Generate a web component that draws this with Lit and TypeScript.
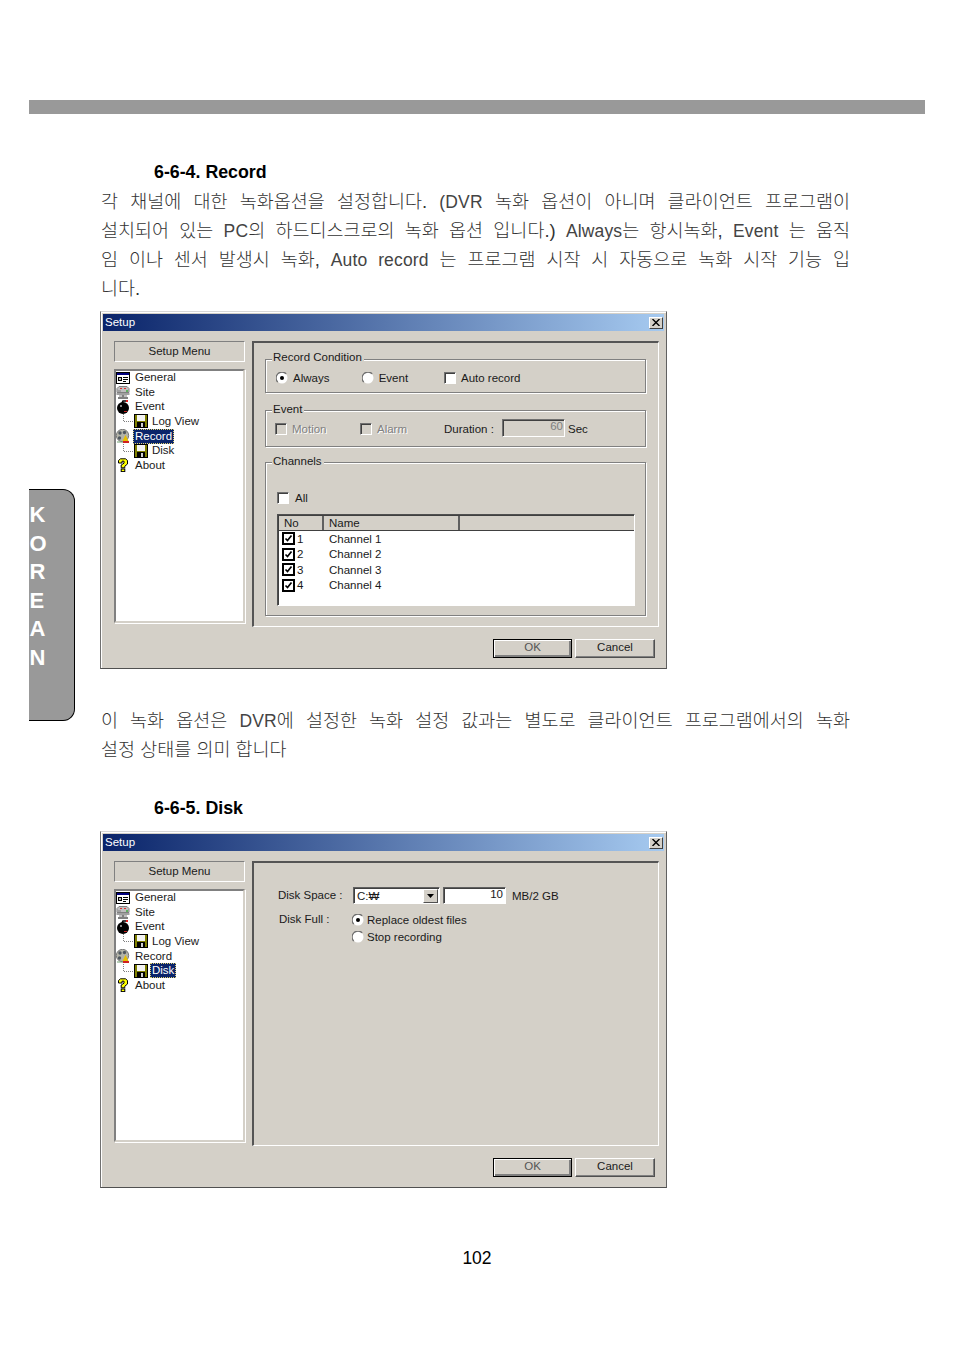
import { LitElement, html, css, svg, nothing } from "lit";
import { customElement, property } from "lit/decorators.js";

const icons: Record<string, any> = {
  general: svg`<rect x="0.5" y="1.5" width="13" height="11" fill="#fff" stroke="#000"/><rect x="1" y="2" width="12" height="2" fill="#000080"/><rect x="2" y="6" width="4" height="4" fill="#000"/><path d="M7 6.5h5M7 8.5h5M7 10.5h3" stroke="#000"/><path d="M3 7h2v2h-2z" fill="#c0c0c0"/>`,
  site: svg`<path d="M3 1.5h8l2 2v4H1v-4z" fill="#c0c0c0" stroke="#808080"/><path d="M4 3.5h2M8 3.5h2" stroke="#e03030"/><path d="M2 6h3" stroke="#808080"/><path d="M10 6h2" stroke="#00a000"/><rect x="0.5" y="8" width="13" height="2" fill="#a0a0a0"/><path d="M7 10v2M2 13h10" stroke="#000"/><path d="M3 11h8" stroke="#808080"/>`,
  event: svg`<circle cx="7" cy="8" r="6" fill="#000"/><path d="M6 3l1-2h3" stroke="#000" fill="none" stroke-width="1.6"/><rect x="10" y="0" width="2" height="2" fill="#e02020"/><rect x="4" y="5" width="2" height="2" fill="#888"/><rect x="8" y="11" width="3" height="1" fill="#c02020"/>`,
  disk: svg`<rect x="0" y="0" width="14" height="14" fill="#000"/><rect x="1" y="1" width="12" height="12" fill="#808000"/><rect x="3" y="1" width="8" height="6" fill="#f4f4f4"/><rect x="3" y="8" width="8" height="6" fill="#000"/><rect x="7" y="9" width="2" height="4" fill="#d0d0d0"/>`,
  record: svg`<circle cx="6.5" cy="6.5" r="6.2" fill="#b4b4a8" stroke="#787878"/><circle cx="4" cy="4" r="1.7" fill="#505860"/><circle cx="8.5" cy="3.5" r="1.7" fill="#505860"/><circle cx="3.5" cy="9" r="1.7" fill="#505860"/><path d="M9.5 6l3 6H6.5z" fill="#e8c000"/><path d="M7 12h6v2H7z" fill="#d02020"/><path d="M1 13h6" stroke="#70a070"/>`,
  about: svg`<path d="M2.5 5V2.5L4.5 .8h5l2 1.7V6L8.8 8.2v1.6H5.2V7L8 5.2V3.2H6V5z" fill="#ffff00" stroke="#000"/><rect x="5.2" y="11" width="3.6" height="2.6" fill="#ffff00" stroke="#000"/>`,
};

const icon = (n: string) => html`<svg class="ic" viewBox="0 0 14 14" width="14" height="14">${icons[n]}</svg>`;
const elbow = html`<svg class="elbow" viewBox="0 0 18 14" width="18" height="14"><path d="M7.5 -2V7.5H17" fill="none" stroke="#808080" stroke-dasharray="1 1"/></svg>`;

@customElement("setup-dialog")
class SetupDialog extends LitElement {
  @property() selected = "Record";
  static styles = css`
    :host { display: block; width: 567px; box-sizing: border-box; border: 1px solid #d8d8d8; border-right-color: #606060; border-bottom-color: #505050; border-left-color: #707070; background: #d4d0c8; padding: 2px; box-shadow: inset 1px 1px 0 #fff; font: 11.5px/14px "Liberation Sans", sans-serif; color: #1a1a1a; }
    .title { height: 17px; box-sizing: border-box; display: flex; align-items: center; justify-content: space-between; padding: 0 1px 0 2px; background: linear-gradient(90deg, #0a246a, #a6caf0); color: #fff; }
    .title > span:first-child { margin-top: -2px; }
    .close { width: 14px; height: 12px; box-sizing: border-box; background: #d4d0c8; border: 1px solid; border-color: #fff #404040 #404040 #fff; display: flex; align-items: center; justify-content: center; }
    .body { display: flex; gap: 7px; padding: 10px 5px 0 11px; }
    .side { width: 131px; flex: none; display: flex; flex-direction: column; gap: 7px; }
    .menu-h { height: 21px; box-sizing: border-box; border: 1px solid; border-color: #808080 #fff #fff #808080; display: flex; align-items: center; justify-content: center; padding-bottom: 2px; }
    .tree { box-sizing: border-box; height: 254px; background: #fff; border: 2px solid; border-color: #808080 #d4d0c8 #d4d0c8 #808080; box-shadow: 1px 1px 0 #fff; }
    .tree.short { height: 253px; }
    .row { height: 14.65px; display: flex; align-items: center; white-space: nowrap; }
    .row:first-child { margin-top: -0.8px; }
    .row .ic, .row .elbow { flex: none; }
    .row .t { padding: 0 1px; margin-left: 3px; line-height: 13px; border: 1px dotted transparent; }
    .row.child .t { margin-left: 2px; }
    .row .t.sel { background: #0a246a; color: #fff; border-color: #e0d070; }
    .panel { flex: 1; box-sizing: border-box; border: 2px solid; border-color: #555 #fff #fff #555; border-right-width: 1px; border-bottom-width: 1px; }
    .panel.rec { height: 286px; padding: 16px 12px 0 11px; display: flex; flex-direction: column; }
    .panel.disk { height: 285px; padding: 24px 0 0 24px; display: flex; flex-direction: column; }
    .group { box-sizing: border-box; border: 1px solid #808080; box-shadow: 1px 1px 0 #fff, inset 1px 1px 0 #fff; }
    .legend { display: table; margin: -9px 0 0 6px; padding: 0 2px 0 1px; background: #d4d0c8; }
    .g1 { height: 34px; margin-bottom: 17px; }
    .g1 .legend { margin-top: -10px; }
    .g2 { height: 37px; margin-bottom: 15px; }
    .g3 { height: 154px; padding: 0 10px 0 11px; }
    .g3 .legend { margin-left: -5px; }
    .opts { display: flex; align-items: center; padding-left: 10px; height: 14px; }
    .g1 .opts { margin-top: 7px; }
    .g2 .opts { margin-top: 6px; padding-left: 9px; }
    .opt { display: flex; align-items: center; gap: 5px; flex: none; }
    .w86 { width: 85.7px; } .w82 { width: 82.3px; } .w85 { width: 85px; } .w84 { width: 84px; }
    .off { color: #808080; text-shadow: 1px 1px 0 #fff; }
    .radio { width: 12px; height: 12px; flex: none; }
    .cb { width: 12px; height: 12px; box-sizing: border-box; flex: none; background: #fff; border: 1px solid; border-color: #707070 #fff #fff #707070; box-shadow: inset 1px 1px 0 #404040; }
    .cb.dis { background: #d4d0c8; }
    .dur { width: 58px; flex: none; }
    .num { box-sizing: border-box; width: 63px; height: 18px; flex: none; border: 1px solid; border-color: #707070 #fff #fff #707070; box-shadow: inset 1px 1px 0 #404040; text-align: right; padding: 0 1px 4px 0; line-height: 13px; color: #808080; margin: -2px 3px 0 0; }
    .all { margin-top: 24px; margin-bottom: 10px; gap: 6px; height: 12px; }
    .list { box-sizing: border-box; height: 92px; background: #fff; border: 1px solid; border-color: #505050 #fff #fff #505050; box-shadow: inset 1px 1px 0 #404040; padding: 1px 0 0 1px; }
    .lh { display: flex; height: 14px; background: #d4d0c8; border-bottom: 1px solid #404040; }
    .lh div { box-sizing: border-box; border-right: 2px solid #606060; padding-left: 5px; line-height: 14px; }
    .lh .c1 { width: 45px; } .lh .c2 { width: 136px; padding-left: 5px; }
    .lh .c3 { flex: 1; border-right: 0; }
    .lr { display: flex; align-items: center; height: 15.5px; padding-left: 3px; }
    .tick { width: 13px; height: 13px; box-sizing: border-box; border: 2px solid #000; background: #fff; display: flex; align-items: center; justify-content: center; flex: none; }
    .lr .n { width: 34px; padding-left: 2px; box-sizing: border-box; }
    .foot { display: flex; justify-content: flex-end; gap: 3px; padding: 12px 9px 8px 0; }
    .btn { box-sizing: border-box; width: 80px; height: 19px; display: flex; align-items: center; justify-content: center; border: 1px solid; border-color: #fff #505050 #505050 #fff; box-shadow: inset -1px -1px 0 #808080; padding-bottom: 3px; }
    .btn.def { width: 79px; border-color: #000; box-shadow: inset 1px 1px 0 #fff, inset -2px -2px 0 #808080; color: #555; }
    .dr { display: flex; align-items: center; }
    .dl1 { width: 75px; flex: none; padding-bottom: 2px; }
    .combo { box-sizing: border-box; width: 87px; height: 17px; background: #fff; border: 1px solid; border-color: #606060 #fff #fff #606060; box-shadow: inset 1px 1px 0 #404040; display: flex; align-items: center; justify-content: space-between; padding: 1px 1px 0 3px; }
    .arrow { width: 15px; height: 14px; box-sizing: border-box; background: #d4d0c8; border: 1px solid; border-color: #fff #505050 #505050 #fff; display: flex; align-items: center; justify-content: center; }
    .size { box-sizing: border-box; width: 63px; height: 17px; margin-left: 3px; background: #fff; border: 1px solid; border-color: #606060 #fff #fff #606060; box-shadow: inset 1px 1px 0 #404040; text-align: right; padding: 0 2px 0 0; line-height: 13px; margin-right: 6px; }
    .df { margin-top: 8px; align-items: flex-start; padding-left: 1px; }
    .df .dl2 { width: 73px; flex: none; line-height: 15px; }
    .dopts { display: flex; flex-direction: column; gap: 3px; margin-top: 1px; }
    .dopts .opt { height: 14px; gap: 3px; }
  `;

  private radio(on: boolean) {
    return html`<svg class="radio" viewBox="0 0 12 12"><circle cx="6" cy="6" r="5.5" fill="#fff"/><path d="M1.8 10.2A5.5 5.5 0 0 1 10.2 1.8" fill="none" stroke="#707070" stroke-width="1.2"/>${on ? svg`<circle cx="6" cy="6" r="2" fill="#000"/>` : nothing}</svg>`;
  }

  private tree() {
    const item = (label: string, ic: string, child = false) => html`<div class="row ${child ? "child" : ""}">${child ? elbow : nothing}${icon(ic)}<span class="t ${this.selected === label ? "sel" : ""}">${label}</span></div>`;
    return html`<div class="tree ${this.selected === "Disk" ? "short" : ""}">
      ${item("General", "general")}${item("Site", "site")}${item("Event", "event")}${item("Log View", "disk", true)}${item("Record", "record")}${item("Disk", "disk", true)}${item("About", "about")}
    </div>`;
  }

  private recordPanel() {
    const tick = html`<span class="tick"><svg width="9" height="9" viewBox="0 0 9 9"><path d="M1.5 4.5l2 2 4-5" fill="none" stroke="#000" stroke-width="1.7"/></svg></span>`;
    return html`<div class="panel rec">
      <div class="group g1"><span class="legend">Record Condition</span>
        <div class="opts">
          <span class="opt w86">${this.radio(true)}Always</span>
          <span class="opt w82">${this.radio(false)}Event</span>
          <span class="opt"><span class="cb"></span>Auto record</span>
        </div>
      </div>
      <div class="group g2"><span class="legend">Event</span>
        <div class="opts">
          <span class="opt w85 off"><span class="cb dis"></span>Motion</span>
          <span class="opt w84 off"><span class="cb dis"></span>Alarm</span>
          <span class="dur">Duration :</span><span class="num">60</span><span>Sec</span>
        </div>
      </div>
      <div class="group g3"><span class="legend">Channels</span>
        <div class="opt all"><span class="cb"></span>All</div>
        <div class="list">
          <div class="lh"><div class="c1">No</div><div class="c2">Name</div><div class="c3"></div></div>
          ${[1, 2, 3, 4].map((n) => html`<div class="lr">${tick}<span class="n">${n}</span><span class="c">Channel ${n}</span></div>`)}
        </div>
      </div>
    </div>`;
  }

  private diskPanel() {
    return html`<div class="panel disk">
      <div class="dr"><span class="dl1">Disk Space :</span>
        <span class="combo">C:₩<span class="arrow"><svg width="7" height="4" viewBox="0 0 7 4"><path d="M0 0h7L3.5 4z"/></svg></span></span>
        <span class="size">10</span><span>MB/2 GB</span></div>
      <div class="dr df"><span class="dl2">Disk Full :</span>
        <div class="dopts">
          <span class="opt">${this.radio(true)}Replace oldest files</span>
          <span class="opt">${this.radio(false)}Stop recording</span>
        </div>
      </div>
    </div>`;
  }

  render() {
    return html`
      <div class="title"><span>Setup</span><span class="close"><svg width="8" height="7" viewBox="0 0 8 7"><path d="M0.5 0L7.5 7M7.5 0L0.5 7" stroke="#000" stroke-width="1.4"/></svg></span></div>
      <div class="body">
        <div class="side"><div class="menu-h">Setup Menu</div>${this.tree()}</div>
        ${this.selected === "Record" ? this.recordPanel() : this.diskPanel()}
      </div>
      <div class="foot"><span class="btn def">OK</span><span class="btn">Cancel</span></div>`;
  }
}

@customElement("app-root")
export class AppRoot extends LitElement {
  static styles = css`
    :host { display: block; width: 954px; height: 1349px; background: #fff; overflow: hidden; font-family: "Liberation Sans", "Noto Sans CJK KR", sans-serif; color: #333; }
    .page { padding: 100px 29px 0; }
    .bar { height: 14px; background: #999; }
    .main { display: flex; }
    .tab { flex: none; align-self: flex-start; box-sizing: border-box; width: 46px; height: 232px; margin-top: 375px; margin-right: 26px; background: #999; border: 1px solid #000; border-left: 0; border-radius: 0 12px 12px 0; padding: 11px 0 0 0.5px; color: #fff; font-weight: 700; font-size: 22px; line-height: 28.6px; }
    .content { width: 749px; }
    h2 { margin: 0; padding-left: 53px; font-size: 17.8px; line-height: 20px; font-weight: 700; color: #000; }
    .h1 { margin-top: 47.5px; margin-bottom: 5px; }
    .h2 { margin-top: 34px; margin-bottom: 13.5px; }
    .p { font-size: 18.5px; line-height: 29px; font-weight: 300; }
    .p div { height: 29px; text-align: justify; text-align-last: justify; white-space: nowrap; }
    .p div.last { text-align-last: left; }
    .en { font-size: 17.5px; color: #444; letter-spacing: 0.15px; }
    .d { margin-left: -1px; }
    .d1 { margin-top: 8.5px; }
    .p2 { margin-top: 36.5px; }
    .pn { text-align: center; width: 896px; margin-top: 60px; font-size: 17.5px; line-height: 20px; color: #000; margin-left: -72px; }
  `;
  render() {
    return html`<div class="page">
      <div class="bar"></div>
      <div class="main">
        <div class="tab">${"KOREAN".split("").map((c) => html`<div>${c}</div>`)}</div>
        <div class="content">
          <h2 class="h1">6-6-4. Record</h2>
          <div class="p">
            <div>각 채널에 대한 녹화옵션을 설정합니다. <span class="en">(DVR</span> 녹화 옵션이 아니며 클라이언트 프로그램이</div>
            <div>설치되어 있는 <span class="en">PC</span>의 하드디스크로의 녹화 옵션 입니다.) <span class="en">Always</span>는 항시녹화, <span class="en">Event</span> 는 움직</div>
            <div>임 이나 센서 발생시 녹화, <span class="en">Auto record</span> 는 프로그램 시작 시 자동으로 녹화 시작 기능 입</div>
            <div class="last">니다.</div>
          </div>
          <setup-dialog class="d d1" selected="Record"></setup-dialog>
          <div class="p p2">
            <div>이 녹화 옵션은 <span class="en">DVR</span>에 설정한 녹화 설정 값과는 별도로 클라이언트 프로그램에서의 녹화</div>
            <div class="last">설정 상태를 의미 합니다</div>
          </div>
          <h2 class="h2">6-6-5. Disk</h2>
          <setup-dialog class="d" selected="Disk"></setup-dialog>
          <div class="pn">102</div>
        </div>
      </div>
    </div>`;
  }
}
